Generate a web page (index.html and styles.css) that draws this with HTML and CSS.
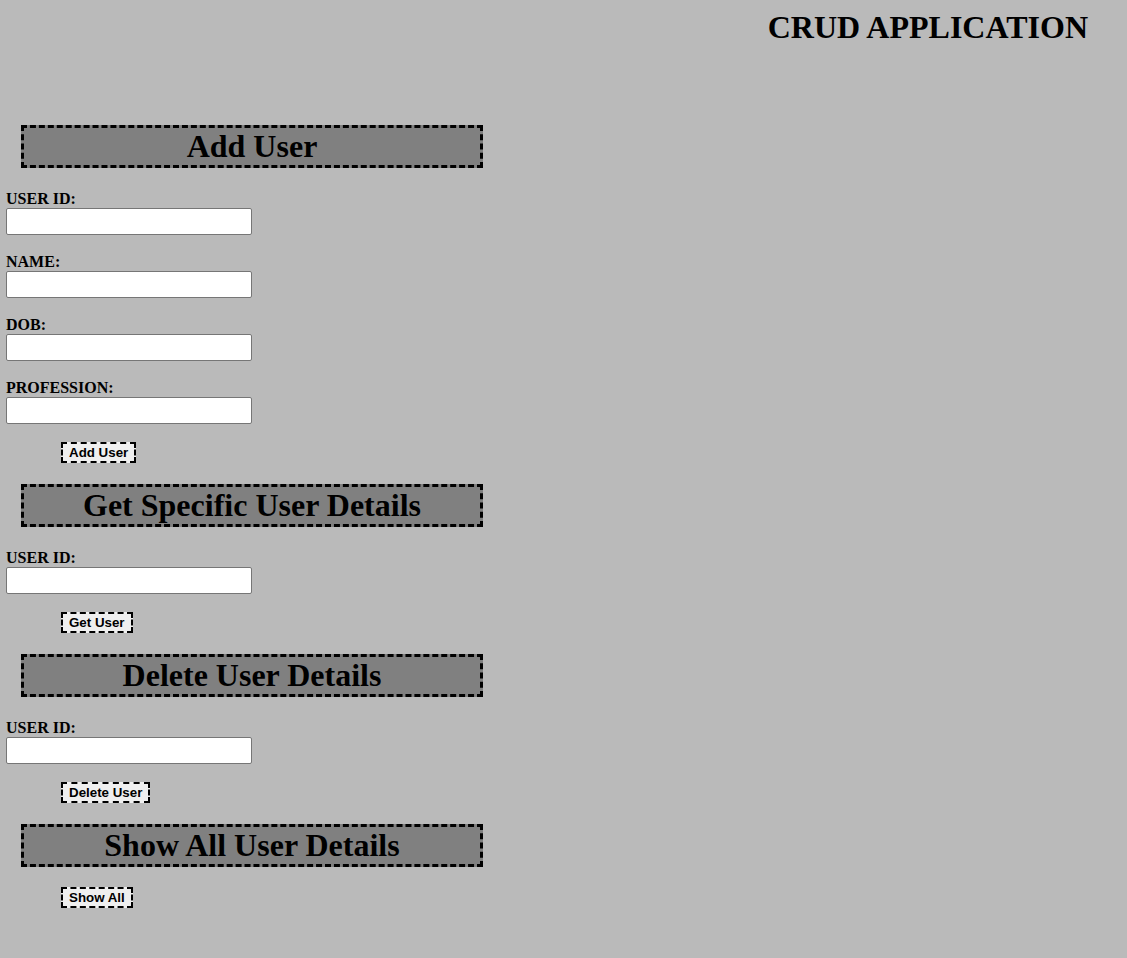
FILE: index.html
```html
<!DOCTYPE html>
<html lang="en">
<head>
<meta charset="utf-8">
<title>CRUD APPLICATION</title>
<link rel="stylesheet" href="styles.css">
</head>
<body>
<header class="header">
  <h1 class="app-title">CRUD APPLICATION</h1>
</header>
<main class="main">
  <section class="section">
    <h2 class="section-title">Add User</h2>
    <div class="fields">
      <div class="field"><label class="field-label">USER ID:</label><input class="field-input" type="text"></div>
      <div class="field"><label class="field-label">NAME:</label><input class="field-input" type="text"></div>
      <div class="field"><label class="field-label">DOB:</label><input class="field-input" type="text"></div>
      <div class="field"><label class="field-label">PROFESSION:</label><input class="field-input" type="text"></div>
    </div>
    <button class="action-btn" type="button">Add User</button>
  </section>
  <section class="section">
    <h2 class="section-title">Get Specific User Details</h2>
    <div class="fields">
      <div class="field"><label class="field-label">USER ID:</label><input class="field-input" type="text"></div>
    </div>
    <button class="action-btn" type="button">Get User</button>
  </section>
  <section class="section">
    <h2 class="section-title">Delete User Details</h2>
    <div class="fields">
      <div class="field"><label class="field-label">USER ID:</label><input class="field-input" type="text"></div>
    </div>
    <button class="action-btn" type="button">Delete User</button>
  </section>
  <section class="section">
    <h2 class="section-title">Show All User Details</h2>
    <button class="action-btn" type="button">Show All</button>
  </section>
</main>
</body>
</html>
```

FILE: styles.css
```css
html, body {
  margin: 0;
  padding: 0;
}
body {
  background: #bababa;
  font-family: "Liberation Serif", "Times New Roman", serif;
  color: #000;
}
.header {
  padding: 9px 39px 0 0;
}
.app-title {
  margin: 0;
  text-align: right;
  font-size: 32px;
  line-height: 37px;
  font-weight: bold;
}
.main {
  display: flex;
  flex-direction: column;
  gap: 21px;
  padding: 79px 0 40px 6px;
}
.section {
  display: flex;
  flex-direction: column;
  align-items: flex-start;
}
.section-title {
  box-sizing: border-box;
  width: 462px;
  height: 43px;
  margin: 0 0 0 15px;
  border: 3px dashed #000;
  background: #808080;
  text-align: center;
  font-size: 32px;
  line-height: 37px;
  font-weight: bold;
}
.fields {
  display: flex;
  flex-direction: column;
  gap: 18px;
  margin-top: 22px;
}
.field {
  display: flex;
  flex-direction: column;
}
.field-label {
  font-size: 16px;
  line-height: 18px;
  font-weight: bold;
}
.field-input {
  box-sizing: border-box;
  width: 246px;
  height: 27px;
  margin: 0;
  border: 1px solid #767676;
  border-radius: 2px;
  background: #fff;
  padding: 1px 2px;
}
.action-btn {
  box-sizing: border-box;
  height: 21px;
  margin: 18px 0 0 55px;
  padding: 1px 6px;
  border: 2px dashed #000;
  background: #efefef;
  font-family: "Liberation Sans", Arial, sans-serif;
  font-size: 13.333px;
  line-height: 15px;
  font-weight: bold;
  color: #000;
}
.section-title + .action-btn {
  margin-top: 20px;
}
```
